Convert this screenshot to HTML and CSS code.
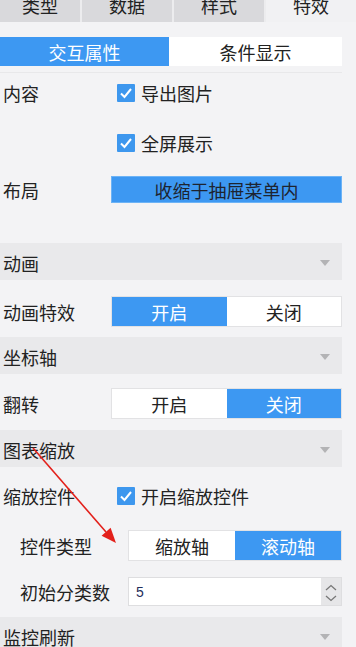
FILE: index.html
```html
<!DOCTYPE html>
<html lang="zh">
<head>
<meta charset="utf-8">
<title>特效</title>
<link rel="stylesheet" href="styles.css">
</head>
<body>
<div class="tabs">
  <div class="tab">类型</div>
  <div class="tab">数据</div>
  <div class="tab">样式</div>
  <div class="tab active">特效</div>
</div>
<div class="panel">
  <div class="subtabs">
    <div class="seg on">交互属性</div>
    <div class="seg">条件显示</div>
  </div>
  <div class="divider"></div>

  <div class="row r-content">
    <div class="label">内容</div>
    <div class="check"><span class="box"><svg viewBox="0 0 18 18" width="18" height="18"><path d="M4 9.5 L7.5 13 L14 5" fill="none" stroke="#fff" stroke-width="2"/></svg></span><span>导出图片</span></div>
  </div>
  <div class="row r-full">
    <div class="label"></div>
    <div class="check"><span class="box"><svg viewBox="0 0 18 18" width="18" height="18"><path d="M4 9.5 L7.5 13 L14 5" fill="none" stroke="#fff" stroke-width="2"/></svg></span><span>全屏展示</span></div>
  </div>
  <div class="row r-layout">
    <div class="label">布局</div>
    <div class="btn">收缩于抽屉菜单内</div>
  </div>

  <div class="section s-anim"><span>动画</span><i class="caret"></i></div>
  <div class="row r-toggle1">
    <div class="label">动画特效</div>
    <div class="toggle"><div class="seg on">开启</div><div class="seg">关闭</div></div>
  </div>

  <div class="section s-axis"><span>坐标轴</span><i class="caret"></i></div>
  <div class="row r-toggle2">
    <div class="label">翻转</div>
    <div class="toggle"><div class="seg">开启</div><div class="seg on">关闭</div></div>
  </div>

  <div class="section s-zoom"><span>图表缩放</span><i class="caret"></i></div>
  <div class="row r-zoomctl">
    <div class="label">缩放控件</div>
    <div class="check"><span class="box"><svg viewBox="0 0 18 18" width="18" height="18"><path d="M4 9.5 L7.5 13 L14 5" fill="none" stroke="#fff" stroke-width="2"/></svg></span><span>开启缩放控件</span></div>
  </div>
  <div class="row sub r-type">
    <div class="label">控件类型</div>
    <div class="toggle"><div class="seg">缩放轴</div><div class="seg on">滚动轴</div></div>
  </div>
  <div class="row sub r-count">
    <div class="label">初始分类数</div>
    <div class="num">
      <span class="val">5</span>
      <span class="spin">
        <svg viewBox="0 0 20 29" width="20" height="29"><path d="M5 12 L10 7.5 L15 12" fill="none" stroke="#777" stroke-width="1.3"/><path d="M5 18 L10 22.5 L15 18" fill="none" stroke="#777" stroke-width="1.3"/></svg>
      </span>
    </div>
  </div>

  <div class="section s-mon"><span>监控刷新</span><i class="caret"></i></div>
</div>

<svg class="arrow" viewBox="0 0 356 647" width="356" height="647">
  <line x1="33" y1="448" x2="106" y2="532" stroke="#e3201b" stroke-width="1.6"/>
  <polygon points="116,543 101.6,535.7 110.6,527.7" fill="#e3201b"/>
</svg>
</body>
</html>
```
FILE: styles.css
```css
html, body {
  margin: 0;
  padding: 0;
  background: #f3f3f5;
  overflow: hidden;
}
body {
  width: 356px;
  height: 647px;
  font-family: "Noto Sans CJK SC", "Noto Sans", sans-serif;
  font-size: 18px;
  color: #222;
}
.tabs {
  display: grid;
  grid-template-columns: 80px 90px 90px 1fr;
  gap: 2px;
  height: 34px;
  margin-top: -12px;
  background: #ececee;
}
.tab {
  background: #d9d9dc;
  display: flex;
  align-items: center;
  justify-content: center;
  font-size: 18px;
  color: #222;
}
.tab.active {
  background: #f1f1f3;
}
.panel {
  width: 342px;
  padding-top: 15px;
}
.subtabs {
  display: grid;
  grid-template-columns: 169px 1fr;
  height: 29px;
}
.seg {
  display: flex;
  align-items: center;
  justify-content: center;
  background: #fff;
  color: #222;
}
.seg.on {
  background: #3d98f2;
  color: #fff;
}
.divider {
  margin-top: 6px;
  height: 1px;
  background: #e8e8ea;
}
.row {
  display: grid;
  grid-template-columns: 111px 1fr;
  align-items: center;
}
.row.sub {
  padding-left: 20px;
  grid-template-columns: 108px 1fr;
}
.label {
  padding-left: 3px;
  white-space: nowrap;
}
.row.sub .label {
  padding-left: 0;
}
.check {
  display: flex;
  align-items: center;
  gap: 6px;
  padding-left: 6px;
}
.box {
  width: 18px;
  height: 18px;
  background: #3d97ee;
  border-radius: 1px;
  display: block;
}
.box svg {
  display: block;
}
.r-content { margin-top: 5px; height: 30px; }
.r-full { margin-top: 20px; height: 30px; }
.r-layout { margin-top: 18px; height: 27px; }
.btn {
  height: 27px;
  box-sizing: border-box;
  border: 1px solid #6cb3f6;
  background: #3d98f2;
  color: #1d2430;
  display: flex;
  align-items: center;
  justify-content: center;
}
.section {
  height: 37px;
  box-sizing: border-box;
  padding: 3px 12px 0 3px;
  background: #e9e9eb;
  display: flex;
  align-items: center;
  justify-content: space-between;
}
.caret {
  width: 0;
  height: 0;
  border-left: 5px solid transparent;
  border-right: 5px solid transparent;
  border-top: 6px solid #b3b3b5;
}
.s-anim { margin-top: 40px; }
.s-axis { margin-top: 10px; }
.s-zoom { margin-top: 11px; }
.s-mon { margin-top: 11px; }
.toggle {
  display: grid;
  grid-template-columns: 1fr 1fr;
  height: 31px;
  box-sizing: border-box;
  border: 1px solid #e2e2e4;
}
.r-toggle1 { margin-top: 16px; }
.r-toggle2 { margin-top: 14px; }
.r-zoomctl { margin-top: 14px; height: 30px; }
.r-type { margin-top: 19px; }
.r-count { margin-top: 16px; }
.num {
  height: 29px;
  box-sizing: border-box;
  border: 1px solid #dedee0;
  background: #fff;
  display: flex;
  align-items: center;
  justify-content: space-between;
}
.val {
  padding-left: 7px;
  font-family: "Liberation Sans", sans-serif;
  font-size: 14px;
  color: #1f2e5a;
}
.spin {
  width: 20px;
  height: 27px;
  background: #e6e6e8;
  display: block;
  overflow: hidden;
}
.spin svg {
  display: block;
}
.arrow {
  position: absolute;
  left: 0;
  top: 0;
  pointer-events: none;
}
```
